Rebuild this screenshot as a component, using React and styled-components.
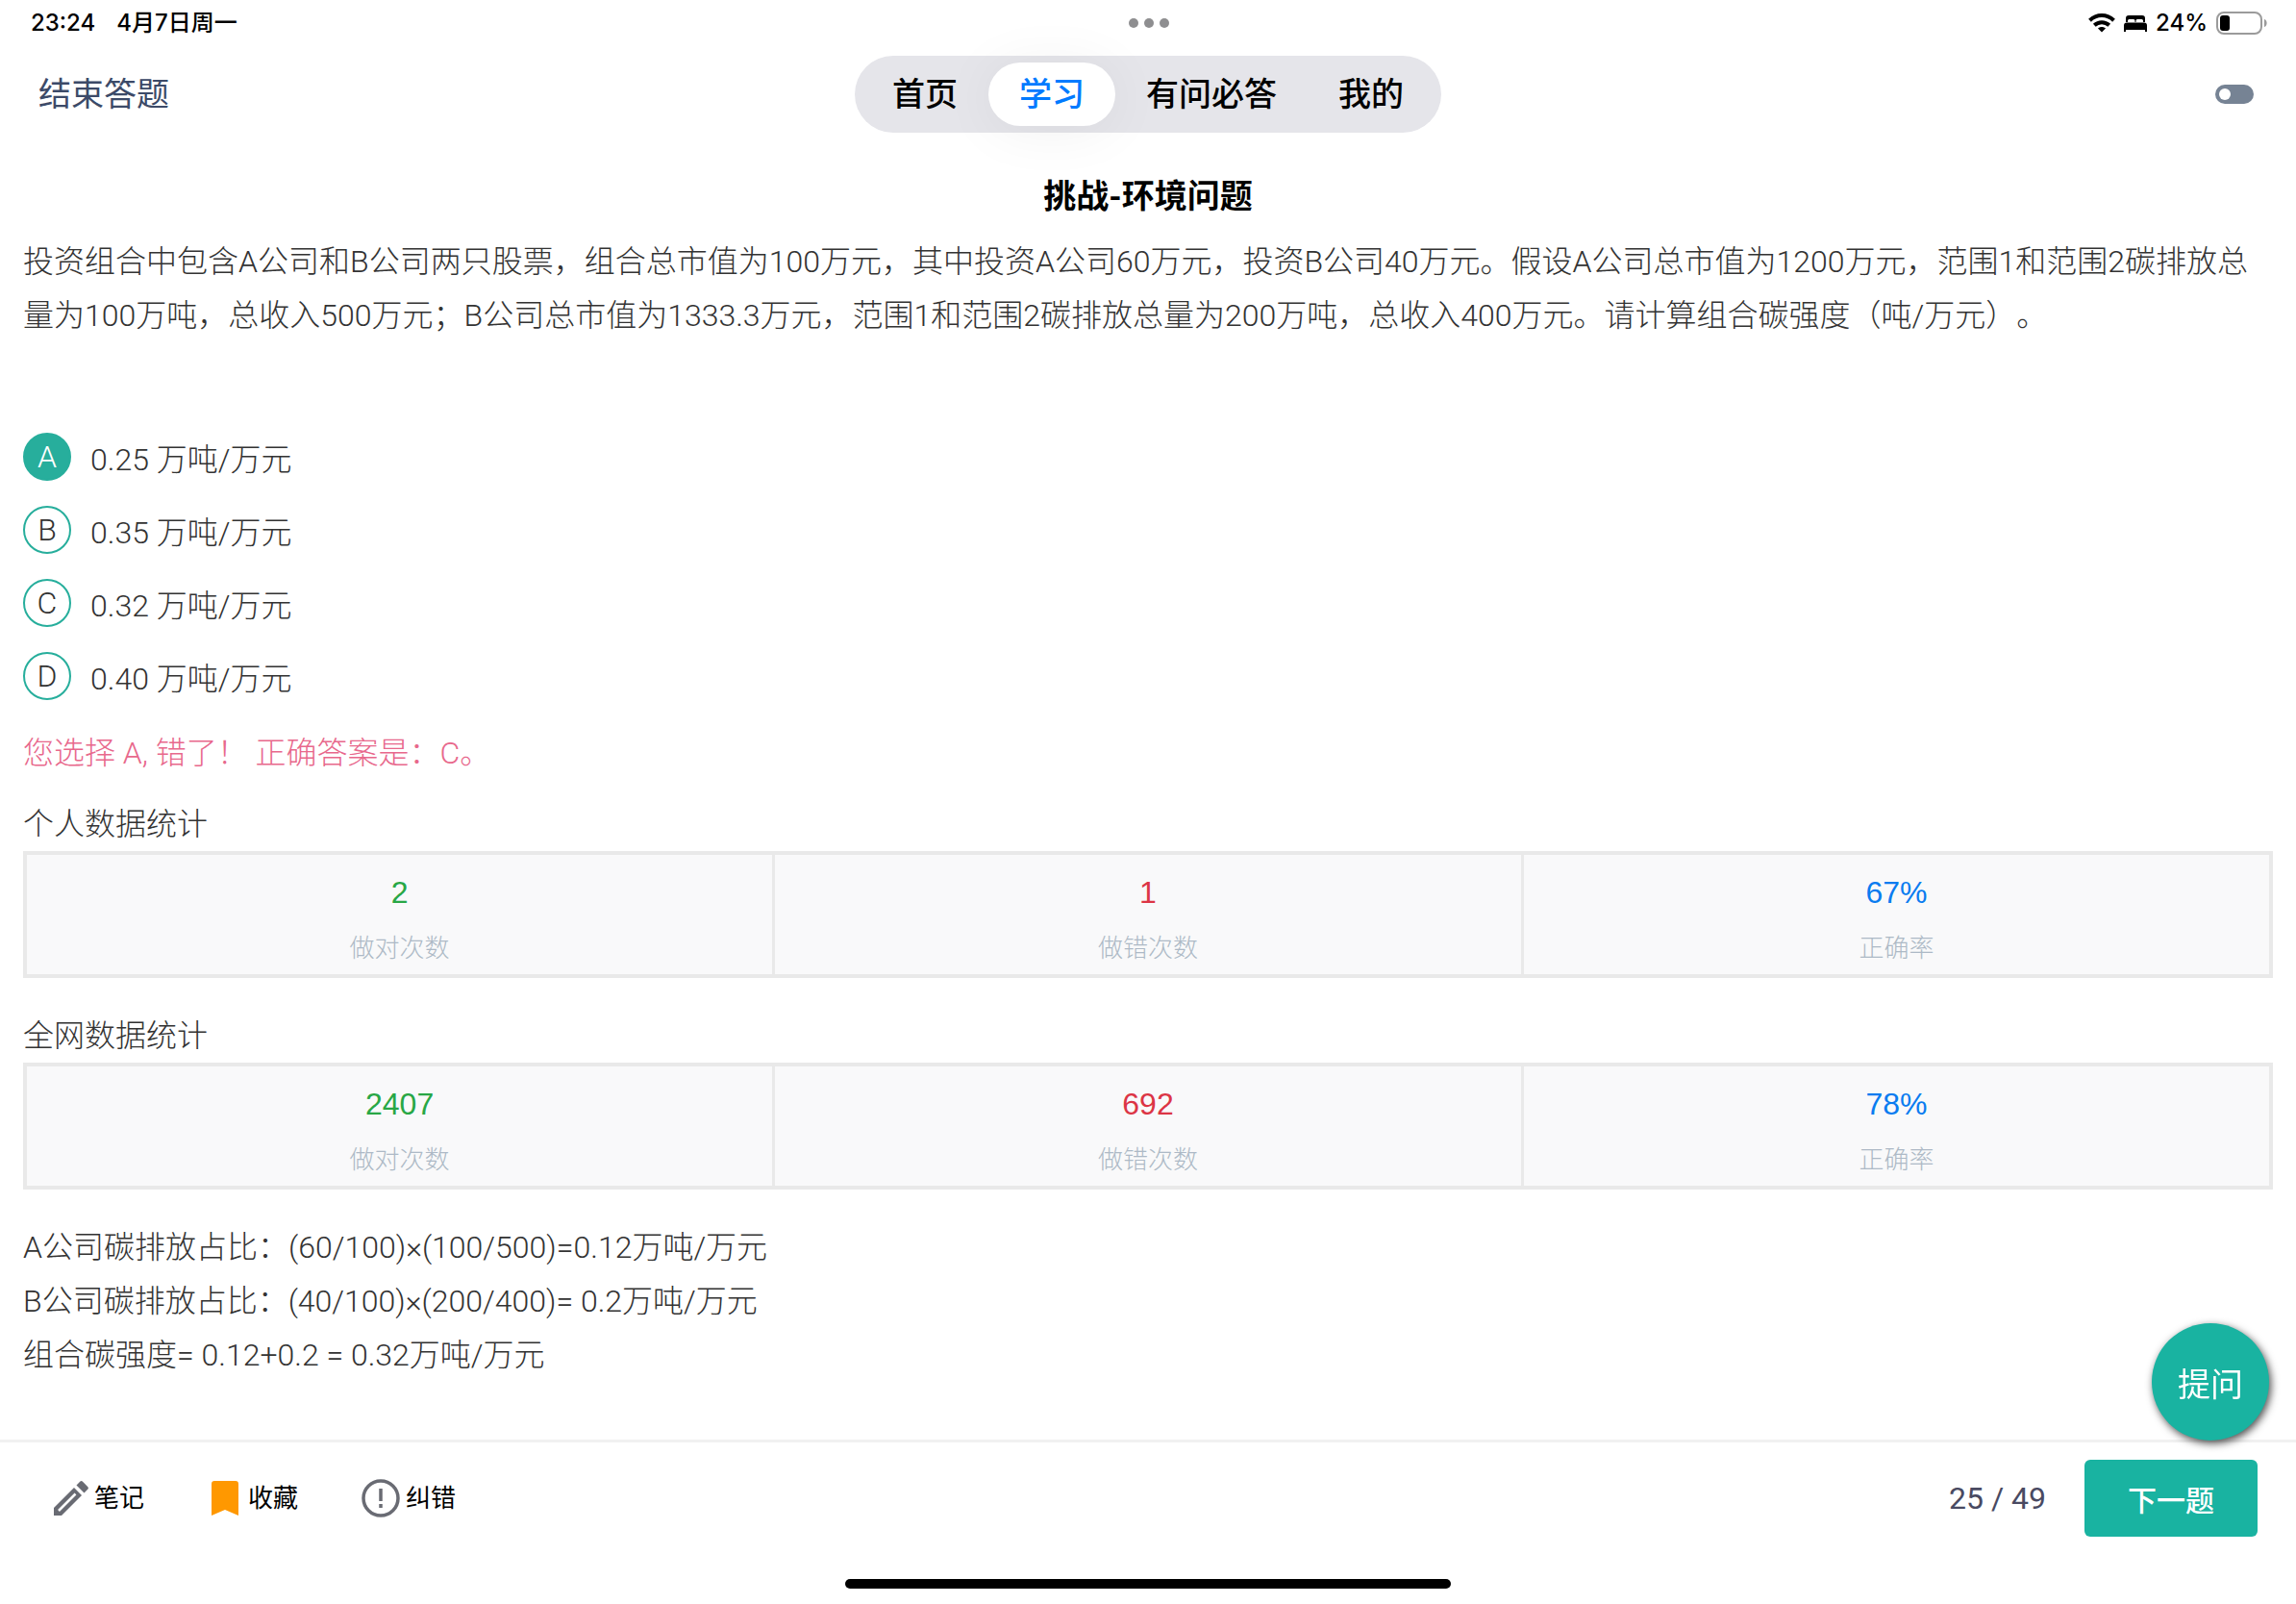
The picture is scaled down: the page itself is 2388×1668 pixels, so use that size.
import React, { useState } from 'react';
import styled, { createGlobalStyle } from 'styled-components';

const Colours = {
    TEAL: '#19b3a1',
    TEAL_RING: '#27ae9c',
    LINK: '#3c4a68',
    TEXT: '#333333',
    BLUE: '#007aff',
    STAT_GREEN: '#28a745',
    STAT_RED: '#dc3545',
    STAT_BLUE: '#0a7cf0',
    STAT_LABEL: '#adb9c6',
    STAT_BORDER: '#e9e9e9',
    STAT_BG: '#f9f9fa',
    WRONG: '#e8688c',
    ICON: '#696b73',
    BOOKMARK: '#ff9800',
};

const tabs = ['首页', '学习', '有问必答', '我的'];

const options = [
    { key: 'A', text: '0.25 万吨/万元' },
    { key: 'B', text: '0.35 万吨/万元' },
    { key: 'C', text: '0.32 万吨/万元' },
    { key: 'D', text: '0.40 万吨/万元' },
];

const personalStats = { right: '2', wrong: '1', rate: '67%' };
const globalStats = { right: '2407', wrong: '692', rate: '78%' };

const WifiIcon = () => (
    <svg width="28" height="20" viewBox="0 0 28 20" fill="none" stroke="#000" strokeWidth="4">
        <path d="M1.5 7.2C8.6.4 19.4.4 26.5 7.2" />
        <path d="M6.3 12.2c4.4-4.1 11-4.1 15.4 0" />
        <path d="M14 19.6l-4-4c2.3-2 5.7-2 8 0z" fill="#000" stroke="none" />
    </svg>
);

const BedIcon = () => (
    <svg width="24" height="17" viewBox="0 0 24 17" fill="#000">
        <path d="M2 7V3a3 3 0 0 1 3-3h14a3 3 0 0 1 3 3v4h-2V5.500a1.500 1.500 0 0 0-1.500-1.500H14a1.500 1.500 0 0 0-1.500 1.500V7h-1V5.500A1.500 1.500 0 0 0 10 4H5.500A1.500 1.500 0 0 0 4 5.500V7z" />
        <path d="M3 7.500h18a3 3 0 0 1 3 3V17h-2v-2H2v2H0v-6.500a3 3 0 0 1 3-3z" />
    </svg>
);

const BatteryIcon = () => (
    <svg width="53" height="24" viewBox="0 0 53 24" fill="none">
        <rect x="1" y="1" width="46" height="22" rx="7" stroke="#9b9b9b" strokeWidth="2" />
        <rect x="4" y="4" width="10" height="16" rx="3" fill="#000" />
        <path d="M50 8c3.500 1 3.500 7 0 8z" fill="#9b9b9b" />
    </svg>
);

const PencilIcon = () => (
    <svg width="36" height="36" viewBox="0 0 36 36" fill={Colours.ICON}>
        <path d="M0 36v-8L21 7l8 8L8 36z" />
        <path d="M5 31L22.500 13.500" stroke="#fff" strokeWidth="2.500" />
        <path d="M23.500 4.500l3.700-3.700a2 2 0 0 1 2.800 0l5.200 5.200a2 2 0 0 1 0 2.800l-3.700 3.700z" />
    </svg>
);

const BookmarkIcon = () => (
    <svg width="36" height="36" viewBox="0 0 36 36" fill={Colours.BOOKMARK}>
        <path d="M4 3a3 3 0 0 1 3-3h22a3 3 0 0 1 3 3v33l-14-6-14 6z" />
    </svg>
);

const AlertIcon = () => (
    <svg width="40" height="40" viewBox="0 0 40 40" fill="none" stroke={Colours.ICON} strokeWidth="3.500">
        <circle cx="20" cy="20" r="18" />
        <path d="M20 10v13M20 26v4" />
    </svg>
);

const Stats = ({ title, data }) => (
    <StatsSection>
        <SectionHeading>{title}</SectionHeading>
        <StatsTable aria-label={title}>
            <tbody>
                <tr>
                    <StatValue $colour={Colours.STAT_GREEN}>{data.right}</StatValue>
                    <StatValue $colour={Colours.STAT_RED}>{data.wrong}</StatValue>
                    <StatValue $colour={Colours.STAT_BLUE}>{data.rate}</StatValue>
                </tr>
                <tr>
                    <StatLabel scope="col">做对次数</StatLabel>
                    <StatLabel scope="col">做错次数</StatLabel>
                    <StatLabel scope="col">正确率</StatLabel>
                </tr>
            </tbody>
        </StatsTable>
    </StatsSection>
);

const App = () => {
    const [activeTab, setActiveTab] = useState('学习');
    const [selected, setSelected] = useState('A');
    const [isOn, setIsOn] = useState(false);

    return (
        <Page>
            <GlobalStyle />
            <StatusBar>
                <StatusGroup>
                    <span>23:24</span>
                    <StatusDate>4月7日周一</StatusDate>
                </StatusGroup>
                <Dots>
                    <i />
                    <i />
                    <i />
                </Dots>
                <StatusGroup $end>
                    <WifiIcon />
                    <BedIcon />
                    <span>24%</span>
                    <BatteryIcon />
                </StatusGroup>
            </StatusBar>

            <Header>
                <EndButton type="button">结束答题</EndButton>
                <Tabs>
                    {tabs.map((tab) => (
                        <Tab key={tab} type="button" $active={tab === activeTab} onClick={() => setActiveTab(tab)}>
                            {tab}
                        </Tab>
                    ))}
                </Tabs>
                <Switch
                    type="checkbox"
                    role="switch"
                    aria-label="切换"
                    checked={isOn}
                    onChange={() => setIsOn(!isOn)}
                />
            </Header>

            <Main>
                <Title>挑战-环境问题</Title>
                <Paragraph>
                    投资组合中包含A公司和B公司两只股票，组合总市值为100万元，其中投资A公司60万元，投资B公司40万元。假设A公司总市值为1200万元，范围1和范围2碳排放总量为100万吨，总收入500万元；B公司总市值为1333.3万元，范围1和范围2碳排放总量为200万吨，总收入400万元。请计算组合碳强度（吨/万元）。
                </Paragraph>

                <Options>
                    {options.map(({ key, text }) => (
                        <Option key={key}>
                            <HiddenRadio
                                type="radio"
                                name="answer"
                                value={key}
                                checked={selected === key}
                                onChange={() => setSelected(key)}
                            />
                            <Letter $selected={selected === key}>{key}</Letter>
                            <OptionText>{text}</OptionText>
                        </Option>
                    ))}
                </Options>

                <Feedback>您选择 A, 错了！ 正确答案是：C。</Feedback>

                <Stats title="个人数据统计" data={personalStats} />
                <Stats title="全网数据统计" data={globalStats} />

                <Paragraph>A公司碳排放占比：(60/100)×(100/500)=0.12万吨/万元</Paragraph>
                <Paragraph>B公司碳排放占比：(40/100)×(200/400)= 0.2万吨/万元</Paragraph>
                <Paragraph>组合碳强度= 0.12+0.2 = 0.32万吨/万元</Paragraph>
            </Main>

            <AskButton type="button">提问</AskButton>

            <Footer>
                <Toolbar>
                    <Tools>
                        <ToolButton type="button">
                            <PencilIcon />
                            笔记
                        </ToolButton>
                        <ToolButton type="button">
                            <BookmarkIcon />
                            收藏
                        </ToolButton>
                        <ToolButton type="button">
                            <AlertIcon />
                            纠错
                        </ToolButton>
                    </Tools>
                    <Counter>25 / 49</Counter>
                    <NextButton type="button">下一题</NextButton>
                </Toolbar>
                <HomeIndicator />
            </Footer>
        </Page>
    );
};

export default App;

const GlobalStyle = createGlobalStyle`
    * {
        box-sizing: border-box;
    }

    body {
        margin: 0;
        background: #ffffff;
        color: ${Colours.TEXT};
        font-family: Roboto, "Noto Sans CJK SC", sans-serif;
        font-size: 32px;
        font-weight: 300;
        text-spacing-trim: space-all;
    }

    button {
        border: 0;
        padding: 0;
        background: none;
        font-family: inherit;
        cursor: pointer;
    }

    svg {
        display: block;
        flex: none;
    }
`;

const Page = styled.div`
    display: flex;
    flex-direction: column;
    min-height: 100vh;
`;

const StatusBar = styled.div`
    display: grid;
    grid-template-columns: 1fr auto 1fr;
    align-items: center;
    height: 48px;
    padding: 0 30px 0 32px;
    color: #000000;
    font-family: Inter, "Noto Sans CJK SC", sans-serif;
    font-size: 24px;
    font-weight: 500;
    line-height: 32px;
`;

const StatusGroup = styled.div`
    display: flex;
    align-items: center;
    justify-content: ${({ $end }) => ($end ? 'flex-end' : 'flex-start')};
    gap: ${({ $end }) => ($end ? 9 : 22)}px;
`;

const StatusDate = styled.span`
    white-space: nowrap;
`;

const Dots = styled.div`
    display: flex;
    gap: 6px;

    i {
        width: 10px;
        height: 10px;
        border-radius: 50%;
        background: #8e8e90;
    }
`;

const Header = styled.header`
    display: grid;
    grid-template-columns: 1fr auto 1fr;
    align-items: center;
    padding: 10px 40px 0;
`;

const EndButton = styled.button`
    justify-self: start;
    color: ${Colours.LINK};
    font-size: 34px;
    font-weight: 400;
    line-height: 48px;
`;

const Tabs = styled.nav`
    display: flex;
    padding: 7px;
    border-radius: 40px;
    background: #e5e5ea;
`;

const Tab = styled.button`
    height: 66px;
    padding: 0 32px;
    border-radius: 33px;
    background: ${({ $active }) => ($active ? '#ffffff' : 'transparent')};
    box-shadow: ${({ $active }) => ($active ? '0 4px 60px rgba(0, 0, 0, 0.06)' : 'none')};
    color: ${({ $active }) => ($active ? Colours.BLUE : '#000000')};
    font-size: 34px;
    font-weight: 500;
    line-height: 48px;
`;

const Switch = styled.input`
    justify-self: end;
    appearance: none;
    display: flex;
    align-items: center;
    justify-content: ${({ checked }) => (checked ? 'flex-end' : 'flex-start')};
    width: 40px;
    height: 20px;
    margin: 0 4px 0 0;
    padding: 0 4px;
    border-radius: 10px;
    background: #768394;
    cursor: pointer;

    &::before {
        content: '';
        width: 12px;
        height: 12px;
        border-radius: 50%;
        background: #ffffff;
    }
`;

const Main = styled.main`
    flex: 1;
    padding: 42px 24px 56px;
`;

const Title = styled.h1`
    margin: 0 0 16px;
    color: #000000;
    font-size: 34px;
    font-weight: 700;
    line-height: 48px;
    text-align: center;
`;

const Paragraph = styled.p`
    margin: 0;
    line-height: 56px;
`;

const Options = styled.div`
    display: flex;
    flex-direction: column;
    margin-top: 81px;
`;

const Option = styled.label`
    display: flex;
    align-items: center;
    gap: 20px;
    height: 76px;
    cursor: pointer;
`;

const HiddenRadio = styled.input`
    position: absolute;
    opacity: 0;
    width: 1px;
    height: 1px;
    margin: 0;
`;

const Letter = styled.span`
    display: flex;
    align-items: center;
    justify-content: center;
    width: 50px;
    height: 50px;
    border: 2px solid ${Colours.TEAL_RING};
    border-radius: 50%;
    background: ${({ $selected }) => ($selected ? Colours.TEAL_RING : 'transparent')};
    color: ${({ $selected }) => ($selected ? '#ffffff' : Colours.TEXT)};
    line-height: 46px;
`;

const OptionText = styled.span`
    padding-top: 6px;
    line-height: 56px;
`;

const Feedback = styled.p`
    margin: 14px 0 18px;
    color: ${Colours.WRONG};
    line-height: 56px;
`;

const StatsSection = styled.section`
    margin-bottom: 32px;
`;

const SectionHeading = styled.h2`
    margin: 0;
    font-size: 32px;
    font-weight: 300;
    line-height: 56px;
`;

const StatsTable = styled.table`
    width: 100%;
    table-layout: fixed;
    border: 4px solid ${Colours.STAT_BORDER};
    border-collapse: collapse;
    background: ${Colours.STAT_BG};

    td + td,
    th + th {
        border-left: 3px solid ${Colours.STAT_BORDER};
    }
`;

const StatValue = styled.td`
    padding: 11px 0 10px;
    color: ${({ $colour }) => $colour};
    font-family: "Liberation Sans", sans-serif;
    font-weight: 400;
    line-height: 56px;
    text-align: center;
`;

const StatLabel = styled.th`
    padding: 0 0 7px;
    color: ${Colours.STAT_LABEL};
    font-size: 26px;
    font-weight: 300;
    line-height: 40px;
    text-align: center;
`;

const AskButton = styled.button`
    position: fixed;
    right: 28px;
    bottom: 170px;
    width: 122px;
    height: 122px;
    border-radius: 50%;
    background: ${Colours.TEAL};
    box-shadow: 2px 3px 8px rgba(0, 0, 0, 0.7);
    color: #ffffff;
    font-size: 34px;
    font-weight: 400;
`;

const Footer = styled.footer`
    padding: 18px 40px 16px;
    border-top: 3px solid #f1f1f1;
`;

const Toolbar = styled.div`
    display: flex;
    align-items: center;
`;

const Tools = styled.div`
    display: flex;
    align-items: center;
    gap: 66px;
    flex: 1;
    padding-left: 16px;
`;

const ToolButton = styled.button`
    display: flex;
    align-items: center;
    gap: 6px;
    color: #000000;
    font-size: 26px;
    font-weight: 400;
    line-height: 40px;
`;

const Counter = styled.span`
    margin-right: 40px;
    color: #494a62;
    font-weight: 400;
    line-height: 48px;
`;

const NextButton = styled.button`
    width: 180px;
    height: 80px;
    border-radius: 6px;
    background: ${Colours.TEAL};
    color: #ffffff;
    font-size: 30px;
    font-weight: 500;
`;

const HomeIndicator = styled.div`
    width: 630px;
    max-width: 60%;
    height: 10px;
    margin: 44px auto 0;
    border-radius: 5px;
    background: #000000;
`;
